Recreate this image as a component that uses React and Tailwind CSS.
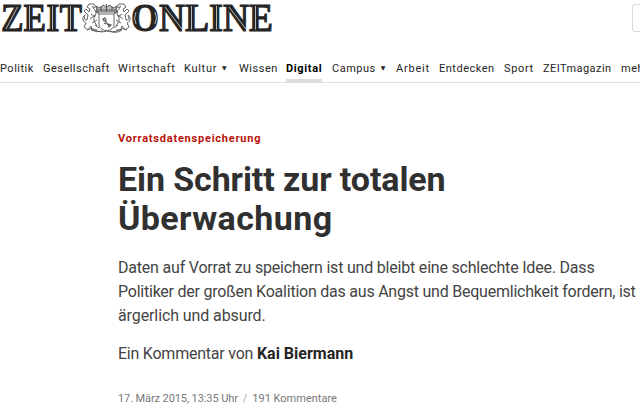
import React from 'react';

const navItems = [
  { label: 'Politik', className: 'w-[43px] tracking-[0.5px]' },
  { label: 'Gesellschaft', className: 'w-[75px] tracking-[0.47px]' },
  { label: 'Wirtschaft', className: 'w-[66px] tracking-[0.65px]' },
  { label: 'Kultur', className: 'w-[55px] tracking-[0.7px]', menu: true },
  { label: 'Wissen', className: 'w-[47px] tracking-[0.55px]' },
  { label: 'Digital', className: 'w-[46px] tracking-[0.65px]', active: true },
  { label: 'Campus', className: 'w-[64px] tracking-[0.5px]', menu: true },
  { label: 'Arbeit', className: 'w-[43px] tracking-[0.8px]' },
  { label: 'Entdecken', className: 'w-[65px] tracking-[0.5px]' },
  { label: 'Sport', className: 'w-[39px] tracking-[0.65px]' },
  { label: 'ZEITmagazin', className: 'w-[78px] tracking-[0.45px]' },
  { label: 'mehr', className: 'w-[40px] tracking-[0.55px]' },
];

const Lion = () => (
  <g>
    <path d="M99 13l-3-1 1-3-3-5-5 0-2 3 3 2-1 3-3-3-2 2 4 4-1 5c-3 1-3-3-2-5-3 2-3 6 1 8l-2 4 4 3 3-4 1 4h5" />
    <path d="M93 7c0 2 3 3 3 6s-3 4-2 8l3 5M91 14l4 3M90 19l5-4M92 23l5-3" />
    <path d="M92 6l3 2M95 11l4 3M95 25l4 3" />
  </g>
);

const Logo = () => (
  <svg width="276" height="36" viewBox="0 0 276 36" className="block overflow-visible">
    <g
      fill="#252525"
      stroke="#252525"
      strokeWidth="0.9"
      fontFamily="Liberation Serif, serif"
      fontWeight="700"
      fontSize="39"
    >
      <text x="1" y="30.500" textLength="81" lengthAdjust="spacingAndGlyphs">ZEIT</text>
      <text x="131" y="30.500" textLength="142" lengthAdjust="spacingAndGlyphs">ONLINE</text>
    </g>
    <g stroke="#fff" strokeWidth="0.8" strokeOpacity="0.85" fill="none">
      <path d="M17.500 7L6 29M29.500 6v23.500M52.500 6v23.500M70.500 6v23.500" />
      <path d="M136 12q-3 6 0 12M155 12q3 6 0 12" />
      <path d="M165 7l17 22M191.500 6v23.500M216.500 6v23.500M229 7l17 22M255.500 6v23.500" />
    </g>
    <g fill="none" stroke="#555" strokeWidth="0.9">
      <Lion />
      <g transform="translate(213 0) scale(-1 1)">
        <Lion />
      </g>
      <path d="M99 14h15v11q0 4-7 6q-8-2-8-6z" fill="#fff" />
      <path d="M98 12l-2-6 4 2 3-3 3 2 4-2 3 3 4-2-2 6z" fill="#bbb" />
      <path d="M98 10h17M106.500 4v8M101 6v5M112 6v5" />
      <path d="M103 19l2-1 1 2-2 1zM105 20l3 5M108 24l3 1-2 2zM104 23l2 1" strokeWidth="1.200" />
      <path d="M87 30q5-3 10 1 5 2 10 0 6 2 10 0 5-4 10-1M91 30q6 3 12 1M110 31q6 3 12-1" />
    </g>
  </svg>
);

const App = () => {
  return (
    <div className="w-[640px] h-[404px] overflow-hidden bg-white font-['Roboto','Liberation_Sans',sans-serif] text-[#252525]">
      <header className="h-[83px] border-b border-[#dedede]">
        <div className="h-[57px] flex justify-between">
          <Logo />
          <div className="w-5 h-[28px] mt-1 -mr-3 shrink-0 rounded-[3px] border border-[#d8d8d8]" />
        </div>
        <nav className="h-[25px] flex whitespace-nowrap text-[11px] leading-[23px]">
          {navItems.map((item) => (
            <a key={item.label} className={`${item.className} shrink-0 flex items-start`}>
              <span className={item.active ? 'h-[25px] font-bold text-black border-b-[3px] border-[#dedede]' : ''}>
                {item.label}
              </span>
              {item.menu && <span className="ml-[5px] text-[6px] leading-[22px] font-['DejaVu_Sans']">▼</span>}
            </a>
          ))}
        </nav>
      </header>

      <main className="pl-[118px] pt-[46px]">
        <div className="h-[18px] text-[11px] leading-[19px] font-bold tracking-[0.78px] text-[#b91109]">
          Vorratsdatenspeicherung
        </div>
        <h1 className="mt-[13px] text-[34px] leading-[39px] font-bold text-[#303030]">
          <span className="block tracking-[-0.1px]">Ein Schritt zur totalen</span>
          <span className="block tracking-[0.4px]">Überwachung</span>
        </h1>
        <p className="mt-[18px] text-[16px] leading-6 whitespace-nowrap text-[#444]">
          <span className="block tracking-[-0.2px]">
            Daten auf Vorrat zu speichern ist und bleibt eine schlechte Idee. Dass
          </span>
          <span className="block tracking-[-0.23px]">
            Politiker der großen Koalition das aus Angst und Bequemlichkeit fordern, ist
          </span>
          <span className="block tracking-[-0.1px]">ärgerlich und absurd.</span>
        </p>
        <p className="mt-[14px] text-[16px] leading-6 tracking-[-0.23px] text-[#444]">
          Ein Kommentar von <b className="tracking-normal text-[#252525]">Kai Biermann</b>
        </p>
        <div className="mt-[24px] text-[11px] leading-[18px] text-[#777] flex gap-[5px]">
          <span className="tracking-[-0.1px]">17. März 2015, 13:35 Uhr</span>
          <span className="text-[#aaa]">/</span>
          <span>191 Kommentare</span>
        </div>
      </main>
    </div>
  );
};

export default App;
